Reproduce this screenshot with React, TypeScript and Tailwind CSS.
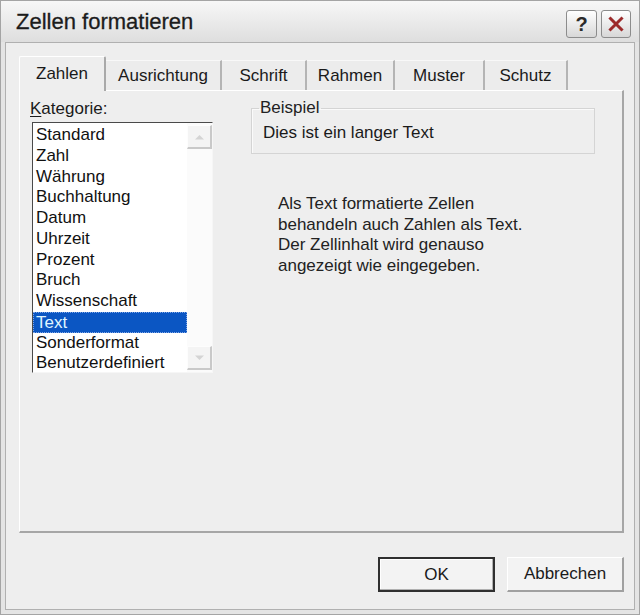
import React from 'react';

const categories = [
  'Standard',
  'Zahl',
  'Währung',
  'Buchhaltung',
  'Datum',
  'Uhrzeit',
  'Prozent',
  'Bruch',
  'Wissenschaft',
  'Text',
  'Sonderformat',
  'Benutzerdefiniert',
];

const tabs = [
  { label: 'Zahlen', w: 'w-[87px]' },
  { label: 'Ausrichtung', w: 'w-[116px]' },
  { label: 'Schrift', w: 'w-[85px]' },
  { label: 'Rahmen', w: 'w-[88px]' },
  { label: 'Muster', w: 'w-[90px]' },
  { label: 'Schutz', w: 'w-[83px]' },
];

const ScrollButton: React.FC<{ up?: boolean }> = ({ up }) => (
  <div className="h-[24px] w-[25px] flex items-center justify-center bg-[#f4f4f4] border-t border-l border-[#fdfdfd] border-r-2 border-b-2 border-r-[#c9c9c9] border-b-[#c9c9c9]">
    <svg width="9" height="6" viewBox="0 0 9 6">
      {up ? <path d="M0 5.5 L4.5 1 L9 5.5 Z" fill="#d4d4d4" /> : <path d="M0 0.5 L4.5 5 L9 0.5 Z" fill="#d4d4d4" />}
    </svg>
  </div>
);

export default function App() {
  const selected = 'Text';

  return (
    <div
      className="w-[640px] h-[615px] bg-[#e4e4e4] border border-[#a4a4a4] flex flex-col text-[#1a1a1a] text-[17px]"
      style={{ fontFamily: '"Liberation Sans", Arial, sans-serif' }}
    >
      {/* title bar */}
      <div className="h-[41px] shrink-0 flex items-center justify-between pl-[15px] pr-[8px] bg-gradient-to-b from-[#f7f7f7] to-[#dedede]">
        <span className="text-[22px] text-[#1c1c1c] [-webkit-text-stroke:0.3px_#1c1c1c]">Zellen formatieren</span>
        <div className="flex gap-[4px] mt-[4px]">
          <div className="w-[31px] h-[28px] rounded-[3px] border border-[#8c8c8c] bg-gradient-to-b from-[#ffffff] to-[#d8d8d8] flex items-center justify-center text-[20px] font-bold text-[#2a2a2a]">
            ?
          </div>
          <div className="w-[30px] h-[28px] rounded-[3px] border border-[#8c8c8c] bg-gradient-to-b from-[#ffffff] to-[#d8d8d8] flex items-center justify-center">
            <svg width="16" height="16" viewBox="0 0 16 16">
              <path d="M2.5 2.5 L13.5 13.5 M13.5 2.5 L2.5 13.5" stroke="#9c2a2a" strokeWidth="3" strokeLinecap="square" />
            </svg>
          </div>
        </div>
      </div>

      {/* body */}
      <div className="flex-1 mx-[4px] mb-[4px] border border-[#b0b0b0] bg-[#eeeeee] flex flex-col pl-[13px] pr-[10px] pt-[13px]">
        {/* tabs */}
        <div className="h-[34px] flex items-end">
          {tabs.map((t) =>
            t.label === 'Zahlen' ? (
              <div
                key={t.label}
                className={`${t.w} h-[35px] -mb-[1px] relative z-10 bg-[#eeeeee] border-t border-l border-[#ffffff] border-r-2 border-r-[#a9a9a9] rounded-t-[2px] flex items-center justify-center pb-[1px]`}
              >
                Zahlen
              </div>
            ) : (
              <div
                key={t.label}
                className={`${t.w} h-[30px] bg-[#ececec] border-t border-t-[#f8f8f8] border-r-2 border-r-[#b4b4b4] flex items-center justify-center`}
              >
                {t.label}
              </div>
            )
          )}
        </div>

        {/* panel */}
        <div className="h-[443px] border-t border-l border-[#ffffff] border-r-2 border-b-2 border-r-[#a6a6a6] border-b-[#a6a6a6] flex pl-[10px] pt-[7px]">
          {/* left column */}
          <div className="w-[184px] flex flex-col">
            <div className="h-[21px] leading-[21px]">
              <span className="underline underline-offset-2">K</span>ategorie:
            </div>
            <div className="mt-[3px] ml-[2px] h-[251px] w-[181px] bg-white border-t border-l border-[#4a4a4a] border-r border-b border-r-[#f6f6f6] border-b-[#f6f6f6] flex">
              <div className="flex-1 pt-[2px]">
                {categories.map((c) =>
                  c === selected ? (
                    <div
                      key={c}
                      className="h-[20.75px] leading-[19px] pl-[2px] bg-[#0b56c3] text-[#dff4ff] border border-dotted border-[#7ea5e6]"
                    >
                      {c}
                    </div>
                  ) : (
                    <div key={c} className="h-[20.75px] leading-[20.75px] pl-[3px] text-[#111]">
                      {c}
                    </div>
                  )
                )}
              </div>
              <div className="w-[25px] flex flex-col justify-between py-[2px] bg-[#fbfbfb]">
                <ScrollButton up />
                <ScrollButton />
              </div>
            </div>
          </div>

          {/* right column */}
          <div className="ml-[37px] w-[344px] flex flex-col pt-[1px]">
            <fieldset className="h-[55px] border border-[#d4d4d4] px-[11px] shadow-[inset_1px_1px_0_#fafafa]">
              <legend className="ml-[-4px] px-[1px] leading-[18px] text-[#222]">Beispiel</legend>
              <div className="leading-[21px] mt-[5px]">Dies ist ein langer Text</div>
            </fieldset>
            <div className="mt-[40px] ml-[27px] leading-[20.7px] text-[#222]">
              <div>Als Text formatierte Zellen</div>
              <div>behandeln auch Zahlen als Text.</div>
              <div>Der Zellinhalt wird genauso</div>
              <div>angezeigt wie eingegeben.</div>
            </div>
          </div>
        </div>

        {/* buttons */}
        <div className="mt-[24px] flex justify-end gap-[12px]">
          <div className="w-[117px] h-[35px] border-2 border-[#2f2f2f] bg-[#f3f3f3] flex items-center justify-center shadow-[inset_-1px_-1px_0_#b0b0b0,inset_1px_1px_0_#ffffff]">
            OK
          </div>
          <div className="w-[117px] h-[35px] border border-[#ffffff] border-r-2 border-b-2 border-r-[#a0a0a0] border-b-[#a0a0a0] bg-[#f3f3f3] flex items-center justify-center">
            Abbrechen
          </div>
        </div>
      </div>
    </div>
  );
}
